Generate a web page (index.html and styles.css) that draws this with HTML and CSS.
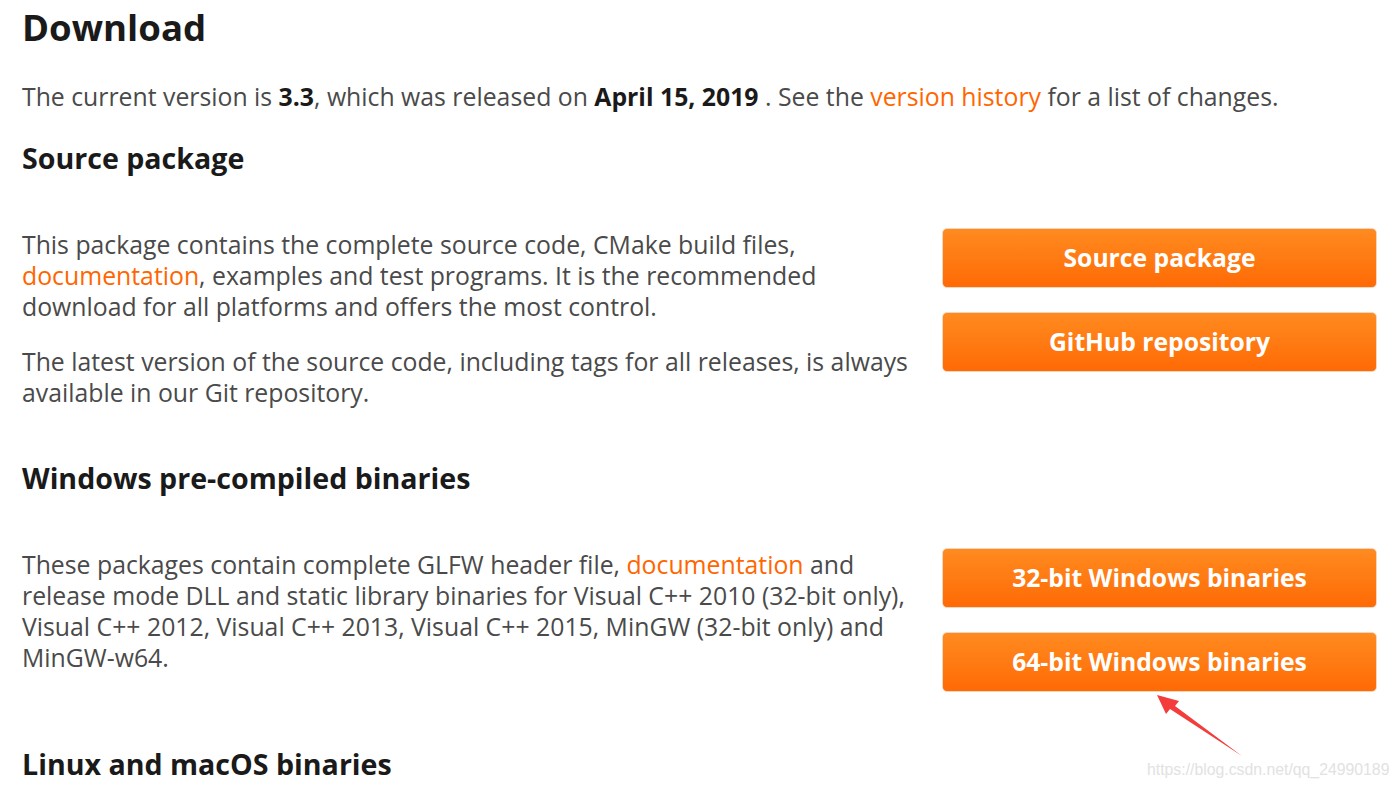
FILE: index.html
```html
<!DOCTYPE html>
<html>
<head>
<meta charset="utf-8">
<link rel="stylesheet" href="styles.css">
</head>
<body>
<div class="page">
  <h1 class="title">Download</h1>
  <p class="lead">The current version is <b>3.3</b>, which was released on <b>April 15, 2019</b> . See the <a href="#">version history</a> for a list of changes.</p>

  <h2 class="section">Source package</h2>
  <div class="row">
    <div class="text">
      <p>This package contains the complete source code, CMake build files, <a href="#">documentation</a>, examples and test programs. It is the recommended download for all platforms and offers the most control.</p>
      <p>The latest version of the source code, including tags for all releases, is always available in our Git repository.</p>
    </div>
    <div class="buttons">
      <a class="btn" href="#">Source package</a>
      <a class="btn" href="#">GitHub repository</a>
    </div>
  </div>

  <h2 class="section">Windows pre-compiled binaries</h2>
  <div class="row">
    <div class="text">
      <p>These packages contain complete GLFW header file, <a href="#">documentation</a> and release mode DLL and static library binaries for Visual C++ 2010 (32-bit only), Visual C++ 2012, Visual C++ 2013, Visual C++ 2015, MinGW (32-bit only) and MinGW-w64.</p>
    </div>
    <div class="buttons">
      <a class="btn" href="#">32-bit Windows binaries</a>
      <a class="btn btn-target" href="#">64-bit Windows binaries
        <svg class="arrow" width="100" height="70" viewBox="0 0 100 70"><path d="M88 62 L21 12 L25 7 L3 1 L12 20 L16 15 Z" fill="#f43c3c"/></svg>
      </a>
    </div>
  </div>

  <h2 class="section last">Linux and macOS binaries</h2>
</div>
<div class="watermark">https://blog.csdn.net/qq_24990189</div>
</body>
</html>
```

FILE: styles.css
```css
html, body { margin: 0; padding: 0; background: #fff; }
body {
  font-family: "Open Sans", "Noto Sans", sans-serif;
  color: #4a4a4a;
  overflow: hidden;
  height: 788px;
  position: relative;
}
.page { padding: 0 22px; }
.title {
  margin: 0;
  padding-top: 4px;
  font-size: 36.6px;
  line-height: 46px;
  font-weight: 700;
  color: #1a1a1a;
}
.lead {
  margin: 31px 0 0;
  font-size: 24.8px;
  line-height: 31px;
  white-space: nowrap;
}
b { color: #1a1a1a; font-weight: 700; }
a { color: #ff6600; text-decoration: none; }
.section {
  margin: 28px 0 0;
  font-size: 28.6px;
  line-height: 36px;
  font-weight: 700;
  color: #1a1a1a;
}
.section.last { margin-top: 49px; }
.row {
  display: flex;
  justify-content: space-between;
  margin-top: 53px;
}
.text { width: 915px; font-size: 24.8px; line-height: 31px; }
.text p { margin: 0 0 24px; }
.buttons {
  width: 435px;
  display: flex;
  flex-direction: column;
  gap: 24px;
  margin-top: -1px;
}
.btn {
  display: block;
  height: 58px;
  line-height: 58px;
  text-align: center;
  color: #fff;
  font-size: 24.7px;
  font-weight: 700;
  border-radius: 5px;
  border: 1px solid #f2d6bd;
  background: linear-gradient(#ff8b20, #ff6a05);
  position: relative;
}
.arrow { position: absolute; left: 211px; top: 61px; }
.watermark {
  position: absolute;
  left: 1147px;
  top: 761px;
  font-family: "Liberation Sans", Arial, sans-serif;
  font-size: 15.8px;
  color: #e2e2e2;
}
```
